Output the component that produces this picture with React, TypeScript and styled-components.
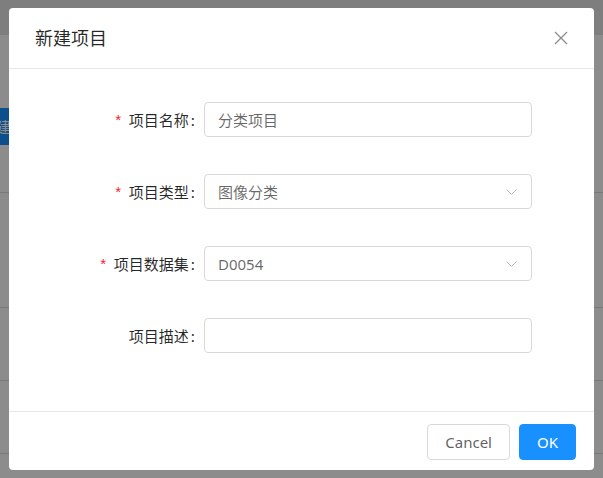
import React from 'react'
import styled, { createGlobalStyle } from 'styled-components'

const GlobalStyle = createGlobalStyle`
  html, body {
    margin: 0;
    padding: 0;
  }
  body {
    font-family: "Noto Sans", "Noto Sans CJK SC", sans-serif;
    -webkit-font-smoothing: antialiased;
  }
  * {
    box-sizing: border-box;
  }
`

const Page = styled.div`
  position: relative;
  width: 603px;
  height: 478px;
  overflow: hidden;
  background: #ffffff;
`

const TopBar = styled.div`
  height: 35px;
  background: #e6e6e6;
`

const Toolbar = styled.div`
  display: flex;
  padding-top: 73px;
  height: 110px;
`

const BlueButton = styled.button`
  height: 37px;
  margin-left: -12px;
  padding: 0 8px;
  border: none;
  background: #1890ff;
  color: #ffffff;
  font-size: 15px;
  font-family: "Noto Sans CJK SC", sans-serif;
`

const TableRow = styled.div<{ h: number }>`
  height: ${(p) => p.h}px;
  border-bottom: 1px solid #dcdcdc;
`

const Mask = styled.div`
  position: absolute;
  inset: 0;
  background: rgba(0, 0, 0, 0.45);
`

const Modal = styled.div`
  position: absolute;
  left: 9px;
  top: 8px;
  width: 585px;
  height: 462px;
  background: #ffffff;
  border-radius: 4px;
  display: flex;
  flex-direction: column;
`

const Header = styled.div`
  height: 61px;
  padding: 0 26px;
  display: flex;
  align-items: center;
  justify-content: space-between;
  border-bottom: 1px solid #e8e8e8;
`

const Title = styled.div`
  font-family: "Noto Sans CJK SC", sans-serif;
  font-size: 18px;
  color: rgba(0, 0, 0, 0.85);
  line-height: 22px;
  margin-top: -2px;
`

const CloseButton = styled.button`
  width: 16px;
  height: 16px;
  margin-right: -1px;
  padding: 0;
  border: none;
  background: transparent;
  display: flex;
  align-items: center;
  justify-content: center;
`

const Body = styled.div`
  height: 342px;
  padding-top: 33px;
  display: flex;
  flex-direction: column;
  gap: 37px;
`

const FormRow = styled.div`
  display: grid;
  grid-template-columns: 195px 328px;
  align-items: center;
  height: 35px;
`

const Label = styled.label`
  font-family: "Noto Sans CJK SC", sans-serif;
  font-size: 15px;
  color: rgba(0, 0, 0, 0.85);
  text-align: right;
  white-space: nowrap;
`

const Star = styled.span`
  color: #f5222d;
  margin-right: 6px;
  font-family: SimSun, "Liberation Mono", monospace;
  font-size: 15px;
`

const Colon = styled.span`
  margin: 0 9px 0 2px;
`

const Field = styled.div`
  height: 35px;
  border: 1px solid #d9d9d9;
  border-radius: 4px;
  padding: 0 13px;
  display: flex;
  align-items: center;
  justify-content: space-between;
  font-size: 15px;
  color: rgba(0, 0, 0, 0.6);
  font-family: "Noto Sans", "Noto Sans CJK SC", sans-serif;
`

const Footer = styled.div`
  border-top: 1px solid #e8e8e8;
  padding: 12px 18px 10px;
  display: flex;
  justify-content: flex-end;
  gap: 9px;
`

const Button = styled.button<{ primary?: boolean }>`
  height: 36px;
  padding: 0 ${(p) => (p.primary ? 17 : 17)}px;
  border-radius: 4px;
  font-family: "Noto Sans", sans-serif;
  font-size: 15px;
  border: 1px solid ${(p) => (p.primary ? '#1890ff' : '#d9d9d9')};
  background: ${(p) => (p.primary ? '#1890ff' : '#ffffff')};
  color: ${(p) => (p.primary ? '#ffffff' : 'rgba(0, 0, 0, 0.65)')};
`

const Chevron = () => (
  <svg width="11" height="6" viewBox="0 0 11 6" style={{ marginRight: 1 }}>
    <polyline
      points="0.5,0.5 5.5,5.5 10.5,0.5"
      fill="none"
      stroke="#bfbfbf"
      strokeWidth="1"
    />
  </svg>
)

const CloseIcon = () => (
  <svg width="14" height="14" viewBox="0 0 14 14">
    <path
      d="M1 1 L13 13 M13 1 L1 13"
      stroke="#8c8c8c"
      strokeWidth="1.3"
      fill="none"
    />
  </svg>
)

interface FieldItem {
  label: string
  required: boolean
  value: string
  select: boolean
}

const fields: FieldItem[] = [
  { label: '项目名称', required: true, value: '分类项目', select: false },
  { label: '项目类型', required: true, value: '图像分类', select: true },
  { label: '项目数据集', required: true, value: 'D0054', select: true },
  { label: '项目描述', required: false, value: '', select: false },
]

const App: React.FC = () => {
  return (
    <Page>
      <GlobalStyle />
      <TopBar />
      <Toolbar>
        <BlueButton>建议</BlueButton>
      </Toolbar>
      <TableRow h={48} />
      <TableRow h={115} />
      <TableRow h={73} />
      <TableRow h={73} />
      <Mask />
      <Modal>
        <Header>
          <Title>新建项目</Title>
          <CloseButton aria-label="close">
            <CloseIcon />
          </CloseButton>
        </Header>
        <Body>
          {fields.map((f) => (
            <FormRow key={f.label}>
              <Label>
                {f.required && <Star>*</Star>}
                {f.label}
                <Colon>:</Colon>
              </Label>
              <Field>
                <span>{f.value}</span>
                {f.select && <Chevron />}
              </Field>
            </FormRow>
          ))}
        </Body>
        <Footer>
          <Button>Cancel</Button>
          <Button primary>OK</Button>
        </Footer>
      </Modal>
    </Page>
  )
}

export default App
